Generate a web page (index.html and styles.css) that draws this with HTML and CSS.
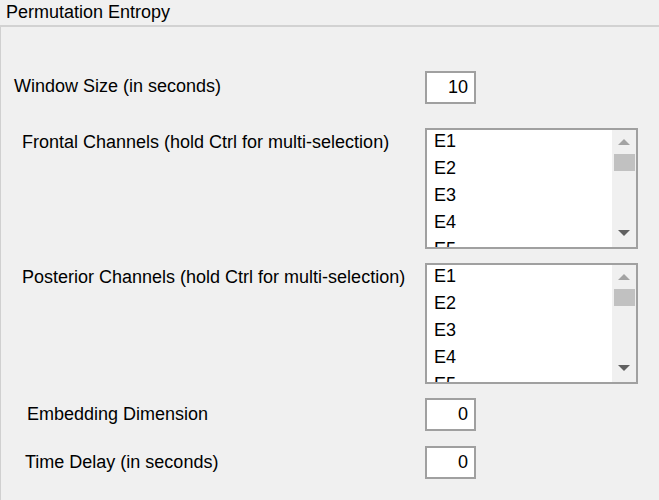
FILE: index.html
```html
<!DOCTYPE html>
<html>
<head>
<meta charset="utf-8">
<link rel="stylesheet" href="styles.css">
</head>
<body>
<div class="panel">
  <div class="title">Permutation Entropy</div>
  <div class="content">
    <div class="row row-window">
      <div class="label lbl-window">Window Size (in seconds)</div>
      <div class="field">10</div>
    </div>
    <div class="row row-frontal">
      <div class="label lbl-channels">Frontal Channels (hold Ctrl for multi-selection)</div>
      <div class="listbox">
        <div class="items">
          <div class="item">E1</div>
          <div class="item">E2</div>
          <div class="item">E3</div>
          <div class="item">E4</div>
          <div class="item">E5</div>
        </div>
        <div class="scrollbar">
          <svg class="arrow" width="12" height="6" viewBox="0 0 12 6"><polygon points="0,6 12,6 6,0" fill="#a3a3a3"/></svg>
          <div class="thumb"></div>
          <div class="spacer"></div>
          <svg class="arrow" width="12" height="6" viewBox="0 0 12 6"><polygon points="0,0 12,0 6,6" fill="#606060"/></svg>
        </div>
      </div>
    </div>
    <div class="row row-posterior">
      <div class="label lbl-channels">Posterior Channels (hold Ctrl for multi-selection)</div>
      <div class="listbox">
        <div class="items">
          <div class="item">E1</div>
          <div class="item">E2</div>
          <div class="item">E3</div>
          <div class="item">E4</div>
          <div class="item">E5</div>
        </div>
        <div class="scrollbar">
          <svg class="arrow" width="12" height="6" viewBox="0 0 12 6"><polygon points="0,6 12,6 6,0" fill="#a3a3a3"/></svg>
          <div class="thumb"></div>
          <div class="spacer"></div>
          <svg class="arrow" width="12" height="6" viewBox="0 0 12 6"><polygon points="0,0 12,0 6,6" fill="#606060"/></svg>
        </div>
      </div>
    </div>
    <div class="row row-embed">
      <div class="label lbl-embed">Embedding Dimension</div>
      <div class="field">0</div>
    </div>
    <div class="row row-delay">
      <div class="label lbl-delay">Time Delay (in seconds)</div>
      <div class="field">0</div>
    </div>
  </div>
</div>
</body>
</html>
```
FILE: styles.css
```css
html, body {
  margin: 0;
  padding: 0;
  background: #f0f0f0;
}
body {
  font-family: "Liberation Sans", Arial, sans-serif;
  font-size: 18px;
  color: #000;
  width: 659px;
  height: 500px;
  overflow: hidden;
}
.panel {
  display: flex;
  flex-direction: column;
  height: 500px;
}
.title {
  height: 25px;
  padding-left: 6px;
  line-height: 20px;
  padding-top: 2px;
  box-sizing: border-box;
  border-bottom: 2px solid #d2d2d2;
  box-sizing: content-box;
  height: 23px;
}
.content {
  flex: 1;
  border-left: 1px solid #d0d0d0;
  display: flex;
  flex-direction: column;
}
.row {
  display: flex;
  align-items: flex-start;
}
.label {
  width: 424px;
  box-sizing: border-box;
  line-height: 20px;
  white-space: nowrap;
}
.lbl-window { padding-left: 13px; margin-top: 5px; }
.lbl-channels { padding-left: 21px; margin-top: 4px; }
.lbl-embed { padding-left: 26px; margin-top: 6px; }
.lbl-delay { padding-left: 24px; margin-top: 6px; }

.row-window { margin-top: 44px; }
.row-frontal { margin-top: 24px; }
.row-posterior { margin-top: 14px; }
.row-embed { margin-top: 14px; }
.row-delay { margin-top: 15px; }

.field {
  width: 51px;
  height: 33px;
  box-sizing: border-box;
  border: 2px solid #a0a0a0;
  background: #fff;
  text-align: right;
  padding-right: 6px;
  line-height: 29px;
}
.listbox {
  width: 213px;
  height: 121px;
  box-sizing: border-box;
  border: 2px solid #a0a0a0;
  background: #fff;
  display: flex;
  overflow: hidden;
}
.items {
  flex: 1;
  padding-left: 7px;
  overflow: hidden;
}
.item {
  height: 27px;
  line-height: 23px;
}
.scrollbar {
  width: 24px;
  background: #f0f0f0;
  display: flex;
  flex-direction: column;
  align-items: center;
}
.arrow {
  display: block;
}
.scrollbar .arrow:first-child {
  margin-top: 9px;
}
.scrollbar .arrow:last-child {
  margin-bottom: 11px;
}
.thumb {
  width: 21px;
  height: 17px;
  background: #c1c1c1;
  margin-top: 9px;
  margin-left: 1px;
}
.spacer { flex: 1; }
```
